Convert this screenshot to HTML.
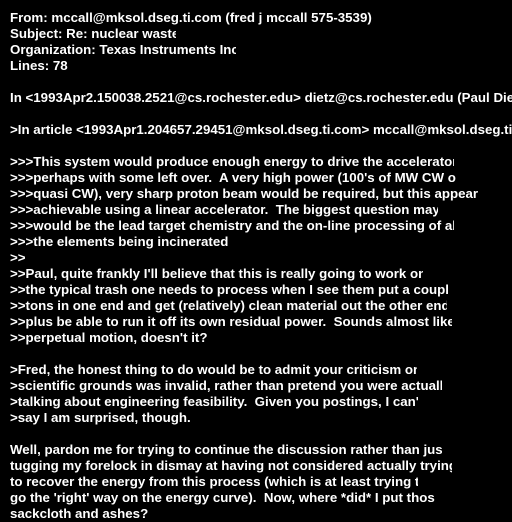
<!DOCTYPE html>
<html><head><style>
html,body{margin:0;padding:0;background:#000;width:512px;height:512px;overflow:hidden}
#t{position:absolute;left:10px;top:10px;width:502px;overflow:hidden;color:#fff;font:bold 13.3px/16px "Liberation Sans",Arial,sans-serif}
#t div{height:16px;overflow:hidden;white-space:pre}
</style></head><body><div id="t"><div style="width:362px">From: mccall@mksol.dseg.ti.com (fred j mccall 575-3539)</div><div style="width:166px">Subject: Re: nuclear waste</div><div style="width:226px">Organization: Texas Instruments Inc</div><div>Lines: 78</div><div> </div><div>In &lt;1993Apr2.150038.2521@cs.rochester.edu&gt; dietz@cs.rochester.edu (Paul Dietz)</div><div> </div><div>&gt;In article &lt;1993Apr1.204657.29451@mksol.dseg.ti.com&gt; mccall@mksol.dseg.ti.com (fred)</div><div> </div><div style="width:444px">&gt;&gt;&gt;This system would produce enough energy to drive the accelerator</div><div style="width:446px">&gt;&gt;&gt;perhaps with some left over.  A very high power (100's of MW CW or</div><div style="width:468px">&gt;&gt;&gt;quasi CW), very sharp proton beam would be required, but this appears</div><div style="width:428px">&gt;&gt;&gt;achievable using a linear accelerator.  The biggest question may</div><div style="width:444px">&gt;&gt;&gt;would be the lead target chemistry and the on-line processing of all</div><div style="width:219px">&gt;&gt;&gt;the elements being incinerated</div><div>&gt;&gt;</div><div style="width:413px">&gt;&gt;Paul, quite frankly I'll believe that this is really going to work on</div><div style="width:439px">&gt;&gt;the typical trash one needs to process when I see them put a couple</div><div style="width:437px">&gt;&gt;tons in one end and get (relatively) clean material out the other end</div><div style="width:442px">&gt;&gt;plus be able to run it off its own residual power.  Sounds almost like</div><div style="width:222px">&gt;&gt;perpetual motion, doesn't it?</div><div> </div><div style="width:407px">&gt;Fred, the honest thing to do would be to admit your criticism on</div><div style="width:432px">&gt;scientific grounds was invalid, rather than pretend you were actually</div><div style="width:408px">&gt;talking about engineering feasibility.  Given you postings, I can't</div><div>&gt;say I am surprised, though.</div><div> </div><div style="width:432px">Well, pardon me for trying to continue the discussion rather than just</div><div style="width:442px">tugging my forelock in dismay at having not considered actually trying</div><div style="width:408px">to recover the energy from this process (which is at least trying to</div><div style="width:425px">go the 'right' way on the energy curve).  Now, where *did* I put those</div><div>sackcloth and ashes?</div></div></body></html>
